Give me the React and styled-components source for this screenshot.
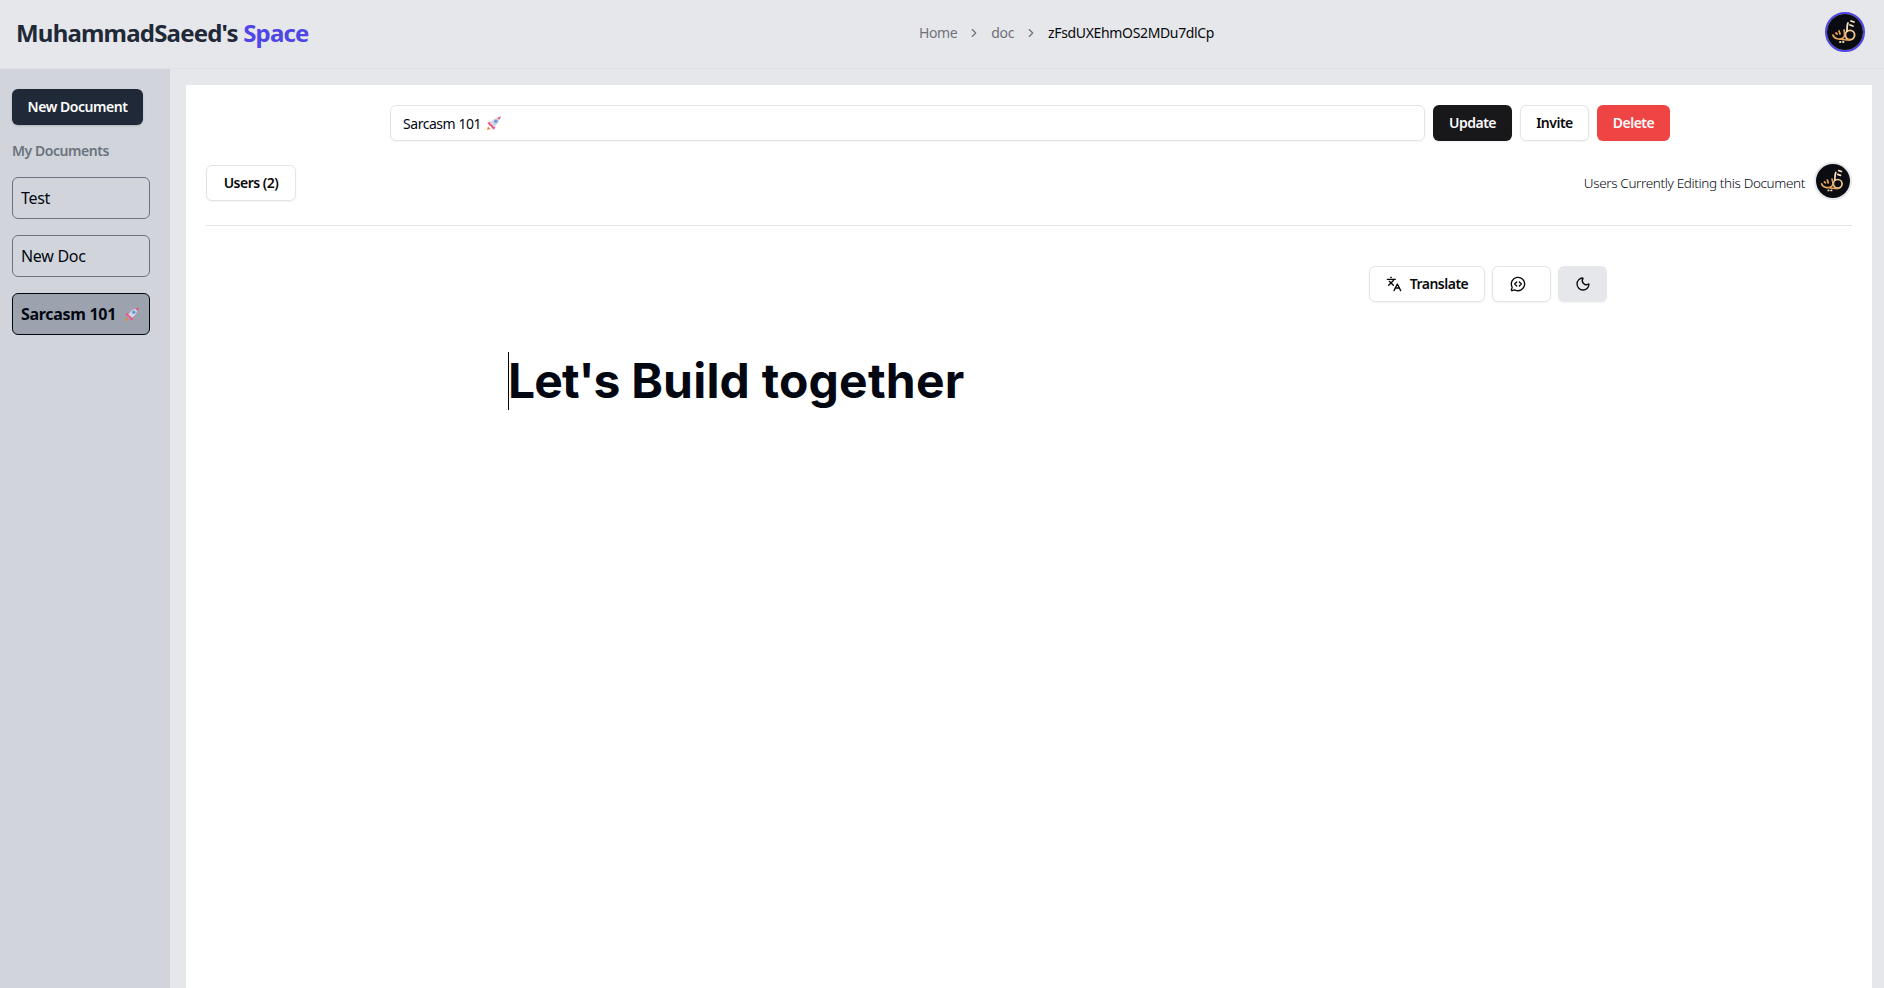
import React from 'react';
import styled, { createGlobalStyle } from 'styled-components';
import { ChevronRight, Languages, MessageCircleCode, Moon } from 'lucide-react';

const GlobalStyle = createGlobalStyle`
  * {
    box-sizing: border-box;
  }

  html,
  body {
    margin: 0;
    height: 100%;
    overflow: hidden;
    font-family: "Noto Sans", "Open Sans", sans-serif;
    letter-spacing: -0.45px;
    color: #030712;
    background: #e5e7eb;
  }
`;

const Page = styled.div`
  display: flex;
  flex-direction: column;
  height: 100vh;
`;

const Header = styled.header`
  display: flex;
  align-items: center;
  justify-content: space-between;
  flex: 0 0 69px;
  padding: 0 19px 0 16px;
  border-bottom: 1px solid #dfe1e6;
  background: #e5e7eb;
`;

const Brand = styled.h1`
  margin: -2px 0 0;
  width: 292px;
  font-size: 24px;
  font-weight: 700;
  line-height: 32px;
  letter-spacing: -0.8px;
  white-space: nowrap;
  color: #1f2937;

  span {
    color: #4f46e5;
  }
`;

const Crumbs = styled.nav`
  display: flex;
  align-items: center;
  gap: 10px;
  margin-top: -3px;
  font-size: 14px;
  line-height: 20px;
  letter-spacing: -0.35px;
  color: #71717a;

  svg {
    width: 14px;
    height: 14px;
    color: #71717a;
  }
`;

const CurrentCrumb = styled.span`
  color: #09090b;
`;

const HeaderAvatar = styled.div`
  display: flex;
  width: 40px;
  height: 40px;
  margin-top: -5px;
  border: 2px solid #4f46e5;
  border-radius: 50%;
  overflow: hidden;
`;

const Body = styled.div`
  display: flex;
  flex: 1;
  min-height: 0;
`;

const Sidebar = styled.aside`
  display: flex;
  flex-direction: column;
  flex: 0 0 170px;
  min-width: 0;
  padding: 20px 20px 0 12px;
  background: #d1d5db;
`;

const NewDocButton = styled.button`
  width: 131px;
  height: 36px;
  border: 0;
  border-radius: 6px;
  background: #1f2937;
  color: #fff;
  font: 600 14px/20px "Noto Sans", sans-serif;
  letter-spacing: inherit;
  box-shadow: 0 1px 2px rgba(0, 0, 0, 0.15);
`;

const SideLabel = styled.h2`
  margin: 16px 0 16px;
  font-size: 14px;
  font-weight: 600;
  line-height: 20px;
  color: #6b7280;
`;

const DocList = styled.div`
  display: flex;
  flex-direction: column;
  gap: 16px;
`;

const DocItem = styled.div`
  display: flex;
  align-items: center;
  gap: 8px;
  height: 42px;
  padding: 0 8px;
  border: 1px solid ${({ $active }) => ($active ? '#030712' : '#6b7280')};
  border-radius: 6px;
  background: ${({ $active }) => ($active ? '#9ca3af' : 'transparent')};
  font-size: 16px;
  font-weight: ${({ $active }) => ($active ? 700 : 400)};
  line-height: 24px;
  letter-spacing: -0.3px;
  white-space: nowrap;
`;

const Main = styled.main`
  flex: 1;
  min-width: 0;
  padding: 16px 12px 0 16px;
`;

const Panel = styled.section`
  height: 100%;
  padding: 20px 20px 0;
  background: #fff;
`;

const TitleForm = styled.div`
  display: flex;
  gap: 8px;
  width: 1280px;
  margin-left: 184px;
`;

const TitleInput = styled.div`
  display: flex;
  align-items: center;
  gap: 5px;
  flex: 1;
  height: 36px;
  padding: 0 12px;
  border: 1px solid #e4e4e7;
  border-radius: 6px;
  font-size: 14px;
  box-shadow: 0 1px 2px rgba(0, 0, 0, 0.05);
`;

const Button = styled.button`
  display: inline-flex;
  align-items: center;
  justify-content: center;
  gap: 8px;
  width: ${({ $w }) => $w}px;
  height: 36px;
  padding: 0;
  border: 1px solid ${({ $variant }) => ($variant === 'outline' ? '#e4e4e7' : 'transparent')};
  border-radius: 6px;
  background: ${({ $variant }) =>
    ({ primary: '#18181b', outline: '#fff', danger: '#ef4444', muted: '#e5e7eb' })[$variant]};
  color: ${({ $variant }) => ($variant === 'primary' || $variant === 'danger' ? '#fafafa' : '#09090b')};
  font: 600 14px/20px "Noto Sans", sans-serif;
  letter-spacing: -0.5px;
  box-shadow: 0 1px 2px rgba(0, 0, 0, 0.05);

  svg {
    width: 16px;
    height: 16px;
  }
`;

const UsersButton = styled(Button)`
  margin-top: 3px;
`;

const AiButton = styled(Button)`
  padding-right: 7px;
`;

const UsersRow = styled.div`
  display: flex;
  align-items: flex-start;
  justify-content: space-between;
  height: 64px;
  margin-top: 21px;
  border-bottom: 1px solid #e4e4e7;
`;

const Editing = styled.div`
  display: flex;
  align-items: center;
  gap: 9px;
  font-size: 13.5px;
  font-weight: 300;
  line-height: 20px;
  letter-spacing: -0.36px;
`;

const EditingLabel = styled.span`
  padding-top: 4px;
`;

const EditorAvatar = styled.div`
  display: flex;
  width: 38px;
  height: 38px;
  border: 2px solid #e5e7eb;
  border-radius: 50%;
  overflow: hidden;
`;

const EditorArea = styled.div`
  display: flex;
  flex-direction: column;
`;

const EditorTools = styled.div`
  display: flex;
  align-self: flex-start;
  gap: 7px;
  margin: 40px 0 0 1163px;
`;

const Heading = styled.div`
  align-self: flex-start;
  margin: 50px 0 0 302px;
  border-left: 1px solid #030712;
  font-family: Inter, sans-serif;
  font-size: 48px;
  font-weight: 700;
  line-height: 58px;
  letter-spacing: 0.2px;
  text-indent: -1px;
`;

const TightWord = styled.span`
  letter-spacing: -0.9px;
`;

// the calligraphy avatar, drawn roughly
const Calligraphy = () => (
  <svg viewBox="0 0 36 36" width="100%" height="100%" fill="none">
    <rect width="36" height="36" fill="#0b0b12" />
    <g stroke="#e6a45a" strokeWidth="1.8" strokeLinecap="round">
      <circle cx="23" cy="21" r="4.6" stroke="#f3c98f" />
      <path d="M6 21c1 4 7 5 10 3 2-1 2-5 1-8" />
      <path d="M14 25c2 1 6 1 9 1" />
      <path d="M20 17c0-3 0-6 1-8" stroke="#f6e2c2" />
      <path d="M24 7l3 1M23 11l3 1" stroke="#f6e2c2" />
      <path d="M12 17l1 3M9 19l1 1" />
      <path d="M13 28h.5M16 28h.5" stroke="#f6e2c2" />
    </g>
  </svg>
);

const Rocket = () => (
  <svg viewBox="0 0 16 16" width="16" height="16">
    <path d="M2 11.5 L4.5 14 L1 15 Z" fill="#e08a2e" />
    <path d="M4.6 6.6 L1.4 8 L3.8 11 Z" fill="#f04f86" />
    <path d="M9.4 11.4 L8 14.8 L5 12.2 Z" fill="#f04f86" />
    <path d="M3.6 10 C5 6 9 2.4 13.4 2.4 C13.6 7 10 11 6 12.4 Z" fill="#cfd5e2" />
    <circle cx="9.8" cy="6.2" r="1.8" fill="#6d9ae0" />
    <path d="M11.2 2.8 C12.4 2.3 14 2 15 1 C14.8 2.2 14.2 3.6 13.2 4.8 Z" fill="#f04f86" />
    <path d="M3.6 10 L6 12.4 L7.6 11.6 L4.4 8.4 Z" fill="#f04f86" />
  </svg>
);

const docs = [
  { id: 1, title: 'Test' },
  { id: 2, title: 'New Doc' },
  { id: 3, title: 'Sarcasm 101', emoji: true, active: true },
];

const App = () => (
  <Page>
    <GlobalStyle />
    <Header>
      <Brand>
        MuhammadSaeed's <span>Space</span>
      </Brand>
      <Crumbs>
        <span>Home</span>
        <ChevronRight />
        <span>doc</span>
        <ChevronRight />
        <CurrentCrumb>zFsdUXEhmOS2MDu7dlCp</CurrentCrumb>
      </Crumbs>
      <HeaderAvatar>
        <Calligraphy />
      </HeaderAvatar>
    </Header>

    <Body>
      <Sidebar>
        <NewDocButton>New Document</NewDocButton>
        <SideLabel>My Documents</SideLabel>
        <DocList>
          {docs.map(doc => (
            <DocItem key={doc.id} $active={doc.active}>
              {doc.title}
              {doc.emoji && <Rocket />}
            </DocItem>
          ))}
        </DocList>
      </Sidebar>

      <Main>
        <Panel>
          <TitleForm>
            <TitleInput>
              Sarcasm 101 <Rocket />
            </TitleInput>
            <Button $variant="primary" $w={79}>
              Update
            </Button>
            <Button $variant="outline" $w={69}>
              Invite
            </Button>
            <Button $variant="danger" $w={73}>
              Delete
            </Button>
          </TitleForm>

          <UsersRow>
            <UsersButton $variant="outline" $w={90}>
              Users (2)
            </UsersButton>
            <Editing>
              <EditingLabel>Users Currently Editing this Document</EditingLabel>
              <EditorAvatar>
                <Calligraphy />
              </EditorAvatar>
            </Editing>
          </UsersRow>

          <EditorArea>
            <EditorTools>
              <Button $variant="outline" $w={116}>
                <Languages />
                Translate
              </Button>
              <AiButton $variant="outline" $w={59}>
                <MessageCircleCode />
              </AiButton>
              <Button $variant="muted" $w={49}>
                <Moon />
              </Button>
            </EditorTools>
            <Heading>
              <TightWord>Let's</TightWord> Build together
            </Heading>
          </EditorArea>
        </Panel>
      </Main>
    </Body>
  </Page>
);

export default App;
